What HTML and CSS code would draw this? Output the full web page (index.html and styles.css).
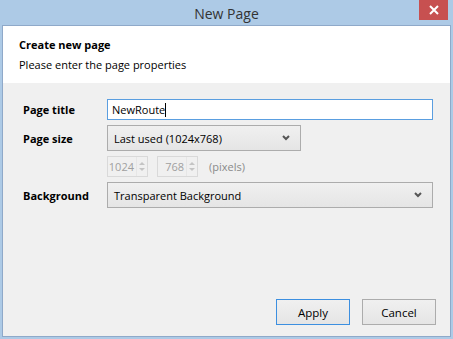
FILE: index.html
```html
<!DOCTYPE html>
<html lang="en">

<head>
    <meta charset="UTF-8">
    <meta name="viewport" content="width=device-width, initial-scale=1.0">
    <title>New Page</title>
    <link rel="stylesheet" href="styles.css">
</head>

<body>
    <div class="window">
        <div class="titlebar">
            <span class="title">New Page</span>
            <div class="close">
                <svg width="10" height="10" viewBox="0 0 10 10">
                    <path d="M1 1 L9 9 M9 1 L1 9" stroke="#fff" stroke-width="2" />
                </svg>
            </div>
        </div>
        <div class="client">
            <div class="header">
                <div class="heading">Create new page</div>
                <div class="subheading">Please enter the page properties</div>
            </div>
            <div class="form">
                <label class="label">Page title</label>
                <div class="field">
                    <div class="textbox">NewRoute<span class="caret"></span></div>
                </div>

                <label class="label">Page size</label>
                <div class="field">
                    <div class="select small">
                        <span>Last used (1024x768)</span>
                        <svg class="arrow" width="8" height="6" viewBox="0 0 8 6">
                            <path d="M1 1 L4 4 L7 1" stroke="#555" stroke-width="2" fill="none" />
                        </svg>
                    </div>
                </div>

                <div></div>
                <div class="field size-row">
                    <div class="spin">
                        <span class="spin-value">1024</span>
                        <span class="spin-btns">
                            <span class="up"></span>
                            <span class="down"></span>
                        </span>
                    </div>
                    <div class="spin">
                        <span class="spin-value">768</span>
                        <span class="spin-btns">
                            <span class="up"></span>
                            <span class="down"></span>
                        </span>
                    </div>
                    <span class="unit">(pixels)</span>
                </div>

                <label class="label">Background</label>
                <div class="field">
                    <div class="select">
                        <span>Transparent Background</span>
                        <svg class="arrow" width="8" height="6" viewBox="0 0 8 6">
                            <path d="M1 1 L4 4 L7 1" stroke="#555" stroke-width="2" fill="none" />
                        </svg>
                    </div>
                </div>
            </div>
            <div class="buttons">
                <button class="btn default">Apply</button>
                <button class="btn">Cancel</button>
            </div>
        </div>
    </div>
</body>

</html>
```
FILE: styles.css
```css
* {
    box-sizing: border-box;
}

body {
    margin: 0;
    padding: 0;
    width: 453px;
    height: 339px;
    font-family: "Open Sans", "Noto Sans", sans-serif;
    font-size: 11px;
    color: #000;
}

.window {
    width: 100%;
    height: 100%;
    background-color: #adcae6;
    padding: 0 2px 2px 2px;
    display: flex;
    flex-direction: column;
}

.titlebar {
    height: 25px;
    display: flex;
    justify-content: center;
    align-items: center;
    position: relative;
}

.title {
    font-size: 14px;
    color: #333;
    padding-top: 2px;
}

.close {
    position: absolute;
    top: 0;
    right: 3px;
    width: 29px;
    height: 20px;
    background-color: #c75050;
    display: flex;
    justify-content: center;
    align-items: center;
}

.client {
    flex: 1;
    background-color: #f0f0f0;
    border: 1px solid #8fa9c9;
    display: flex;
    flex-direction: column;
}

.header {
    background-color: #fff;
    height: 57px;
    padding: 10px 0 0 16px;
}

.heading {
    font-weight: bold;
    line-height: 17px;
}

.subheading {
    margin-top: 3px;
    line-height: 17px;
}

.form {
    display: grid;
    grid-template-columns: 84px 326px;
    row-gap: 5px;
    padding: 16px 0 0 20px;
    align-items: center;
}

.label {
    font-weight: bold;
}

.field {
    display: flex;
    align-items: center;
}

.textbox {
    width: 100%;
    height: 21px;
    background-color: #fff;
    border: 1px solid #5a9ee0;
    padding: 0 4px;
    line-height: 19px;
    display: flex;
    align-items: center;
}

.caret {
    width: 1px;
    height: 14px;
    background-color: #000;
}

.select {
    width: 100%;
    height: 26px;
    border: 1px solid #acacac;
    background: linear-gradient(#f0f0f0, #e5e5e5);
    padding: 0 10px 0 6px;
    display: flex;
    justify-content: space-between;
    align-items: center;
}

.select.small {
    width: 194px;
}

.size-row {
    height: 21px;
}

.spin {
    width: 41px;
    height: 21px;
    border: 1px solid #d9d9d9;
    background-color: #f0f0f0;
    display: flex;
    margin-right: 9px;
    color: #a0a0a0;
}

.spin-value {
    flex: 1;
    text-align: right;
    line-height: 19px;
    padding-right: 2px;
}

.spin-btns {
    width: 11px;
    display: flex;
    flex-direction: column;
    justify-content: center;
    gap: 3px;
    align-items: center;
    border-left: 1px solid #e6e6e6;
}

.up,
.down {
    width: 0;
    height: 0;
    border-left: 3px solid transparent;
    border-right: 3px solid transparent;
}

.up {
    border-bottom: 3px solid #c4c4c4;
}

.down {
    border-top: 3px solid #c4c4c4;
}

.unit {
    color: #8a8a8a;
    margin-left: 2px;
}

.buttons {
    margin-top: auto;
    display: flex;
    justify-content: flex-end;
    gap: 12px;
    padding: 0 14px 11px 0;
}

.btn {
    width: 74px;
    height: 26px;
    font-family: inherit;
    font-size: 11.5px;
    border: 1px solid #acacac;
    background: linear-gradient(#f0f0f0, #e5e5e5);
    color: #000;
}

.btn.default {
    border-color: #3c8fe0;
}
```
